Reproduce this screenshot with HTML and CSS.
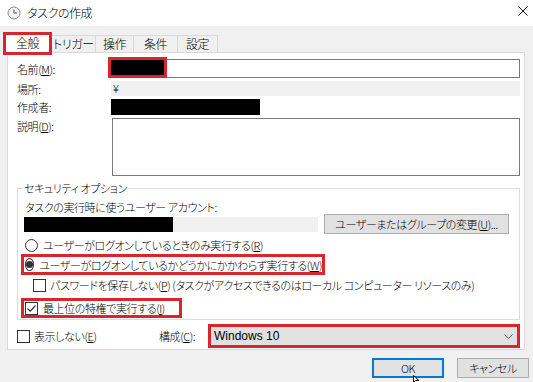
FILE: index.html
```html
<!DOCTYPE html>
<html lang="ja">
<head>
  <meta charset="UTF-8">
  <title>タスクの作成</title>
  <link rel="stylesheet" href="styles.css">
</head>
<body>
  <!-- Title bar -->
  <div class="titlebar">
    <svg class="title-icon" viewBox="0 0 14 14">
      <circle cx="7" cy="7" r="6" fill="#f4f4f4" stroke="#8a8a8a" stroke-width="1"/>
      <path d="M7 3.5 V7 H10" fill="none" stroke="#555" stroke-width="1"/>
    </svg>
    <span class="title">タスクの作成</span>
    <svg class="close" viewBox="0 0 10 10">
      <path d="M0.5 0.5 L9.5 9.5 M9.5 0.5 L0.5 9.5" stroke="#111" stroke-width="1"/>
    </svg>
  </div>

  <!-- Tabs -->
  <div class="tabs">
    <div class="tab active">全般</div>
    <div class="tab w45">トリガー</div>
    <div class="tab w38">操作</div>
    <div class="tab w45">条件</div>
    <div class="tab w40">設定</div>
  </div>

  <!-- General tab -->
  <div class="panel">
    <div class="fields">
      <div class="label">名前(<u>M</u>):</div>
      <div class="input"><span class="redact-name"></span></div>
      <div class="label">場所:</div>
      <div class="location">¥</div>
      <div class="label">作成者:</div>
      <div><div class="author-bar"></div></div>
      <div class="label top">説明(<u>D</u>):</div>
      <div class="textarea"></div>
    </div>

    <fieldset class="security">
      <legend>セキュリティ オプション</legend>
      <div class="line">タスクの実行時に使うユーザー アカウント:</div>
      <div class="account-row">
        <div class="account"><div class="account-bar"></div></div>
        <div class="btn change">ユーザーまたはグループの変更(<u>U</u>)...</div>
      </div>
      <div class="option radio-row">
        <span class="radio"></span>
        <span>ユーザーがログオンしているときのみ実行する(<u>R</u>)</span>
      </div>
      <div class="option radio-row marked wide">
        <span class="radio checked"></span>
        <span>ユーザーがログオンしているかどうかにかかわらず実行する(<u>W</u>)</span>
      </div>
      <div class="option password-row">
        <span class="check"></span>
        <span>パスワードを保存しない(<u>P</u>) (タスクがアクセスできるのはローカル コンピューター リソースのみ)</span>
      </div>
      <div class="option marked narrow">
        <span class="check">
          <svg viewBox="0 0 11 11"><path d="M1.5 5.5 L4.2 8.2 L9.5 2.5" fill="none" stroke="#333" stroke-width="1.2"/></svg>
        </span>
        <span>最上位の特権で実行する(<u>I</u>)</span>
      </div>
    </fieldset>

    <div class="bottom-row">
      <div class="option">
        <span class="check"></span>
        <span>表示しない(<u>E</u>)</span>
      </div>
      <div>構成(<u>C</u>):</div>
      <div class="select">
        <span>Windows 10</span>
        <svg class="chevron" viewBox="0 0 9 5"><path d="M0.5 0.5 L4.5 4.5 L8.5 0.5" fill="none" stroke="#555" stroke-width="1"/></svg>
      </div>
    </div>
  </div>

  <!-- Dialog buttons -->
  <div class="buttons">
    <div class="btn default">OK</div>
    <div class="btn">キャンセル</div>
  </div>

  <svg class="cursor" viewBox="0 0 8 8"><path d="M0.5 0.5 L0.5 7.5 L2.5 5.5 L6 5.5 Z" fill="#fff" stroke="#000" stroke-width="1"/></svg>
</body>
</html>
```

FILE: styles.css
```css
/* Base */
* {
  margin: 0;
  padding: 0;
  box-sizing: border-box;
}
body {
  position: relative;
  width: 533px;
  height: 382px;
  overflow: hidden;
  background: #f0f0f0;
  color: #000;
  font-family: "Noto Sans CJK JP", "Noto Sans", sans-serif;
  font-size: 11px;
  font-weight: 300;
  letter-spacing: -0.4px;
  line-height: 16px;
  font-feature-settings: "palt";
}
u {
  text-decoration-thickness: 1px;
  text-underline-offset: 1px;
}
/* Title bar */
.titlebar {
  height: 26px;
  background: #fff;
  display: flex;
  align-items: center;
  padding-left: 7px;
}
.title-icon {
  width: 14px;
  height: 14px;
  margin-right: 6px;
}
.title {
  flex: 1;
  font-size: 12px;
}
.close {
  width: 10px;
  height: 10px;
  margin: 0 5px 4px 0;
}
/* Tabs */
.tabs {
  height: 26px;
  display: flex;
  align-items: flex-end;
  padding-left: 3px;
}
.tab {
  height: 17px;
  border: 1px solid #d9d9d9;
  border-bottom: none;
  margin-left: -1px;
  text-align: center;
  line-height: 16px;
  white-space: nowrap;
  font-size: 12px;
}
.w45 { width: 45px; }
.w38 { width: 39px; }
.w40 { width: 41px; }
.tab.active {
  position: relative;
  z-index: 1;
  width: 49px;
  height: 23px;
  margin: 0 0 -3px 0;
  border: 3px solid #d8262e;
  background: #fff;
}
/* Panel */
.panel {
  margin-left: 7px;
  width: 518px;
  height: 298px;
  background: #fff;
  border: 1px solid #d9d9d9;
  padding: 6px 4px 0 9px;
}
.fields {
  display: grid;
  grid-template-columns: 93px 1fr;
  grid-template-rows: 19px 15px 16px 58px;
  row-gap: 3px;
}
.label {
  display: flex;
  align-items: center;
}
.label.top {
  align-items: flex-start;
}
.input {
  position: relative;
  border: 1px solid #7a7a7a;
}
.redact-name {
  position: absolute;
  left: -3px;
  top: -3px;
  width: 59px;
  height: 21px;
  background: #000;
  border: 3px solid #d8262e;
}
.location {
  background: #f0f0f0;
  margin-left: 1px;
  padding-left: 2px;
  line-height: 15px;
}
.author-bar {
  width: 149px;
  height: 16px;
  margin-left: 1px;
  background: #000;
}
.textarea {
  margin-left: 2px;
  border: 1px solid #7a7a7a;
}
/* Security options */
.security {
  margin-top: 4px;
  border: 1px solid #dcdcdc;
  padding: 3px 4px 1px 7px;
}
.security legend {
  margin-left: -2px;
  padding: 0 1px;
}
.account-row {
  display: flex;
  align-items: center;
  margin: -1px 0 0 -1px;
  height: 20px;
}
.account {
  width: 294px;
  height: 15px;
  background: #f0f0f0;
}
.account-bar {
  width: 149px;
  height: 15px;
  background: #000;
}
.btn {
  height: 20px;
  background: #e1e1e1;
  border: 1px solid #adadad;
  text-align: center;
  line-height: 18px;
  white-space: nowrap;
}
.btn.change {
  width: 185px;
  margin-left: 6px;
}
.option {
  display: flex;
  align-items: center;
  gap: 5px;
  white-space: nowrap;
}
.radio-row {
  height: 16px;
  margin-top: 3px;
}
.radio-row.marked {
  margin-top: 1px;
}
.marked {
  border: 3px solid #d8262e;
  margin-left: -4px;
  padding-left: 1px;
}
.wide {
  width: 304px;
  height: 21px;
}
.narrow {
  width: 161px;
  height: 20px;
  margin-top: 4px;
}
.password-row {
  height: 18px;
  margin: 1px 0 0 8px;
  gap: 4px;
}
.radio {
  width: 13px;
  height: 13px;
  border: 1px solid #333;
  border-radius: 50%;
  background: #fff;
  display: flex;
  align-items: center;
  justify-content: center;
}
.radio.checked::after {
  content: "";
  width: 7px;
  height: 7px;
  border-radius: 50%;
  background: #333;
}
.check {
  width: 13px;
  height: 13px;
  border: 1px solid #333;
  background: #fff;
  display: flex;
}
.check svg {
  width: 11px;
  height: 11px;
}
/* Bottom row */
.bottom-row {
  display: grid;
  grid-template-columns: 142px 49px 1fr;
  align-items: center;
  margin-top: 4px;
  height: 24px;
}
.bottom-row .option {
  gap: 4px;
}
.select {
  height: 24px;
  border: 3px solid #d8262e;
  background: #e1e1e1;
  padding: 0 4px 0 3px;
  display: flex;
  align-items: center;
  justify-content: space-between;
  font-family: "Liberation Sans", Arial, sans-serif;
  font-size: 12px;
  letter-spacing: 0;
}
.chevron {
  width: 9px;
  height: 5px;
}
/* Dialog buttons */
.buttons {
  display: flex;
  justify-content: flex-end;
  gap: 13px;
  padding-right: 4px;
  margin-top: 8px;
}
.buttons .btn {
  width: 72px;
}
.btn.default {
  border: 2px solid #0078d7;
  line-height: 16px;
}
.cursor {
  position: absolute;
  left: 413px;
  top: 375px;
  width: 8px;
  height: 8px;
}
```
